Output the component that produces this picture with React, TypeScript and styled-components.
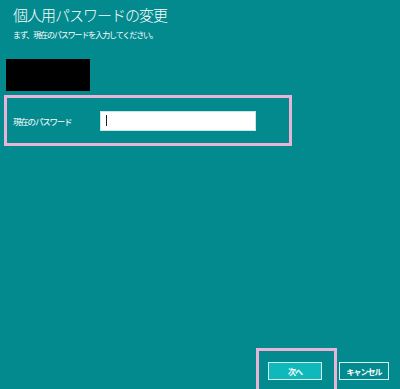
import React from 'react';
import styled, { createGlobalStyle } from 'styled-components';

const GlobalStyle = createGlobalStyle`
    html, body {
        margin: 0;
        padding: 0;
        background: #028a8e;
    }
    * {
        box-sizing: border-box;
    }
`;

const Page = styled.div`
    width: 400px;
    height: 389px;
    display: flex;
    flex-direction: column;
    background: #028a8e;
    color: #fff;
    font-family: "Noto Sans CJK JP", "Noto Sans", sans-serif;
    overflow: hidden;
`;

const Header = styled.div`
    padding: 5px 0 0 13px;
`;

const Title = styled.h1`
    margin: 0;
    font-size: 15px;
    line-height: 20px;
    font-weight: 300;
    letter-spacing: -1px;
`;

const Subtitle = styled.p`
    margin: 5px 0 0;
    font-size: 8px;
    line-height: 10px;
    letter-spacing: -1.1px;
`;

const Redacted = styled.div`
    width: 84px;
    height: 32px;
    margin: 19px 0 0 6px;
    background: #000;
`;

const Highlight = styled.div`
    width: 288px;
    height: 51px;
    margin: 4px 0 0 4px;
    border: 3px solid #e8b4d6;
    display: flex;
    align-items: center;
    padding-left: 6px;
`;

const Label = styled.label`
    width: 87px;
    font-size: 8.5px;
    letter-spacing: -1.2px;
`;

const PasswordInput = styled.div`
    width: 156px;
    height: 20px;
    background: #fff;
    border: 1px solid #c9e6e8;
    display: flex;
    align-items: center;
    padding-left: 5px;
`;

const Caret = styled.span`
    width: 1px;
    height: 11px;
    background: #222;
`;

const Footer = styled.div`
    margin-top: auto;
    display: flex;
    justify-content: flex-end;
    align-items: flex-end;
    padding-right: 11px;
`;

const ButtonHighlight = styled.div`
    border: 3px solid #e8b4d6;
    border-bottom: none;
    padding: 5px 12px 9px 9px;
`;

const Button = styled.button<{ $primary?: boolean }>`
    width: ${(p) => (p.$primary ? '54px' : '50px')};
    height: 18px;
    margin: ${(p) => (p.$primary ? '0' : '0 0 9px 2px')};
    padding: 0;
    border: 1px solid #d4f2f2;
    background: ${(p) => (p.$primary ? '#0fb9bb' : '#028a8e')};
    color: #fff;
    font-family: "Noto Sans CJK JP", sans-serif;
    font-size: 8px;
    font-weight: 700;
    letter-spacing: -1px;
`;

const App: React.FC = () => {
    return (
        <Page>
            <GlobalStyle />
            <Header>
                <Title>個人用パスワードの変更</Title>
                <Subtitle>まず、現在のパスワードを入力してください。</Subtitle>
            </Header>
            <Redacted />
            <Highlight>
                <Label>現在のパスワード</Label>
                <PasswordInput>
                    <Caret />
                </PasswordInput>
            </Highlight>
            <Footer>
                <ButtonHighlight>
                    <Button $primary>次へ</Button>
                </ButtonHighlight>
                <Button>キャンセル</Button>
            </Footer>
        </Page>
    );
};

export default App;
